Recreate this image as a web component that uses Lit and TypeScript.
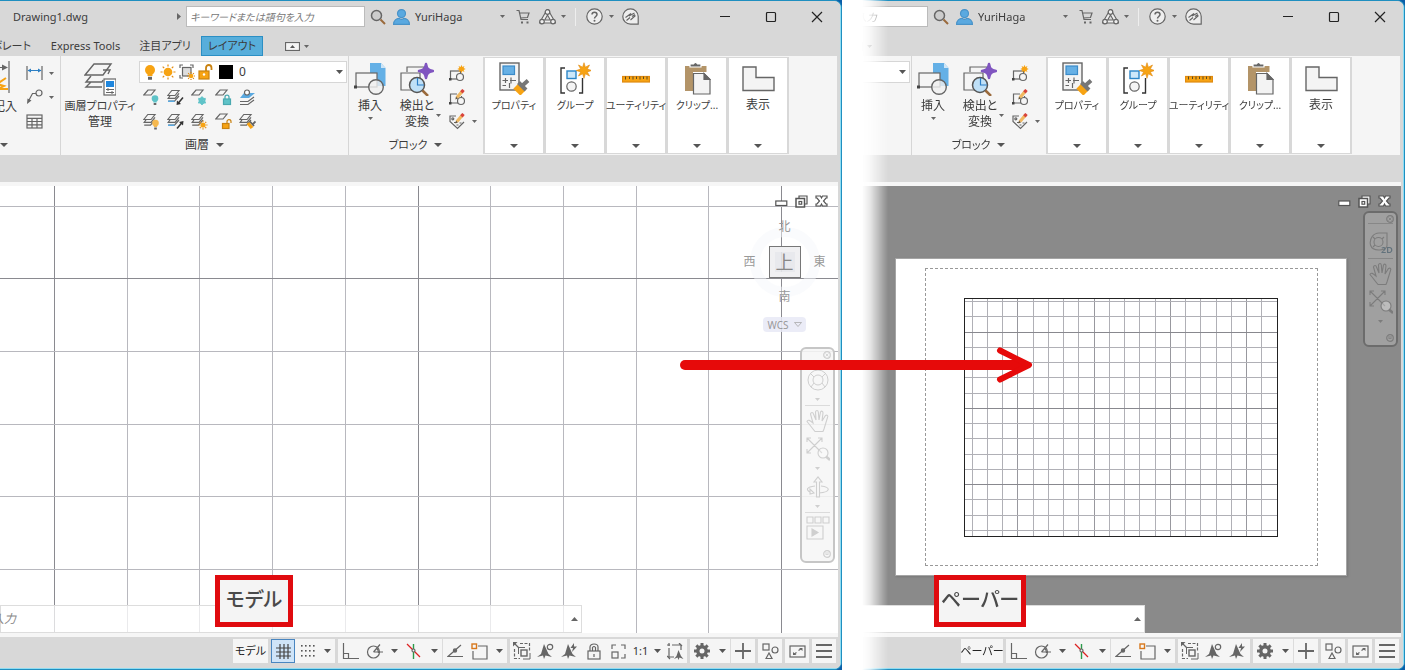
import { LitElement, html, svg, css, nothing } from "lit";
import { customElement, property } from "lit/decorators.js";

type Mode = "model" | "paper";

const G = "#666";
const ORANGE = "#f7a313";
const BLUE = "#5aa9e0";
const TEAL = "#5fc3c8";

const star = (cx: number, cy: number, n: number, outer: number, inner: number) =>
  Array.from({ length: n * 2 }, (_, i) => {
    const r = i % 2 ? inner : outer;
    const a = (Math.PI * i) / n - Math.PI / 2;
    return `${(cx + r * Math.cos(a)).toFixed(2)},${(cy + r * Math.sin(a)).toFixed(2)}`;
  }).join(" ");

const icon = (w: number, h: number, body: unknown) => html`<svg
  class="ic" width=${w} height=${h} viewBox="0 0 ${w} ${h}" fill="none"
  stroke=${G} stroke-width="1.2" aria-hidden="true">${body}</svg>`;

const sun = (cx: number, cy: number, r: number) => svg`
  <circle cx=${cx} cy=${cy} r=${r * 0.58} fill=${ORANGE} stroke="none"/>
  ${Array.from({ length: 8 }, (_, i) => {
    const a = (Math.PI * i) / 4;
    const c = Math.cos(a), s = Math.sin(a);
    return svg`<line x1=${cx + c * r * 0.72} y1=${cy + s * r * 0.72} x2=${cx + c * r} y2=${cy + s * r} stroke="#e08a10" stroke-width="1.2"/>`;
  })}`;

const bulb = (cx: number, cy: number, r: number, col: string) => svg`
  <circle cx=${cx} cy=${cy} r=${r} fill=${col} stroke="none"/>
  <path d="M${cx - r * 0.5} ${cy + r * 0.7}h${r}v${r * 0.5}h${-r}z" fill=${col} stroke="none"/>
  <path d="M${cx - r * 0.4} ${cy + r * 1.35}h${r * 0.8}v${r * 0.6}h${-r * 0.8}z" fill=${G} stroke="none"/>`;

const down = icon(7, 4, svg`<path d="M0 0H7L3.500 4Z" fill="#555" stroke="none"/>`);
const downSmall = icon(5, 3, svg`<path d="M0 0H5L2.500 3Z" fill="#666" stroke="none"/>`);
const downBig = icon(8, 4, svg`<path d="M0 0H8L4 4Z" fill="#555" stroke="none"/>`);

const stack = svg`<path d="M.8 6.500 4.800 1.500H12L8 6.500Z"/><path d="M3.200 6.500 1.200 9.300H8l4-5M1.200 12.200H7.500L12 7" stroke-width="1.200"/>`;
const single = svg`<path d="M.8 6 5 1H12L8 6Z"/>`;
const pencil = svg`<path d="M8 8.500 13.500 2" stroke="#f0b860" stroke-width="3.200"/><path d="M12.400 3.300 14.500 1" stroke="#d8433b" stroke-width="3.200"/><path d="M6.300 10.500 7 7.600 9 9.400Z" fill="#6b5a40" stroke="none"/>`;

const I = {
  search: icon(16, 16, svg`<circle cx="6.500" cy="6.500" r="5" fill="#ccc" stroke="#666" stroke-width="1.500"/><path d="M10.500 10.500 15 15" stroke="#9a6a3c" stroke-width="2"/>`),
  user: icon(17, 16, svg`<circle cx="8.500" cy="4.600" r="4" fill=${BLUE} stroke="#4a93c8"/><path d="M.6 15.300c0-4 3-5.800 5.400-6 1.500 1.200 3.500 1.200 5 0 2.400.2 5.400 2 5.400 6z" fill=${BLUE} stroke="#4a93c8"/>`),
  cart: icon(14, 15, svg`<path d="M.5 1.500H3L5 10.500H12M3.500 4H13L11.500 8.500 4.500 9"/><path d="M5 13.500h2M10.500 13.500h2" stroke-width="2.200"/>`),
  share: icon(17, 16, svg`<path d="M8.500 3 3 12.500H14Z" stroke-width="4.200"/><path d="M8.500 3 3 12.500H14Z" stroke="#eee" stroke-width="2"/><circle cx="8.500" cy="3" r="2.300" fill="#eee"/><circle cx="3" cy="12.600" r="2.300" fill="#eee"/><circle cx="14" cy="12.600" r="2.300" fill="#eee"/>`),
  help: icon(17, 17, svg`<circle cx="8.500" cy="8.500" r="7.700" fill="#eee"/><path d="M6 6.600c0-3.300 5-3.300 5 0 0 1.900-2.500 1.900-2.500 4" stroke-width="1.500"/><circle cx="8.500" cy="12.700" r="1" fill=${G} stroke="none"/>`),
  assist: icon(17, 17, svg`<path d="M8.500.8a7.700 7.700 0 1 0 0 15.400H16.200V8.500A7.700 7.700 0 0 0 8.500.8Z" fill="#eee"/><path d="M3.500 9.500 9 5.500 7 8 12.500 5M4.500 12.500 8 9.500M8.500 12 13.500 7.500M10 8.500 13 6.500" stroke-width="1.100"/>`),
  min: icon(12, 12, svg`<path d="M1 5.500H11" stroke="#222"/>`),
  max: icon(12, 12, svg`<rect x="1.500" y="1.500" width="9" height="9" rx="1" stroke="#222"/>`),
  close: icon(12, 12, svg`<path d="M1 1 11 11M11 1 1 11" stroke="#222"/>`),
  ribbonMin: icon(15, 9, svg`<rect x=".5" y=".5" width="14" height="8" fill="#f4f4f4"/><path d="M5 6H10L7.500 3Z" fill="#555" stroke="none"/>`),

  annotate: icon(22, 34, svg`<path d="M20 0V32M2 6.500H17" /><path d="M13 3.500 19 6.500 13 9.500Z" fill=${G} stroke="none"/><path d="M17 17 8 23 15 25 9 28H19" stroke=${ORANGE} stroke-width="2"/>`),
  dimension: icon(17, 16, svg`<path d="M1 1V15M16 1V15"/><path d="M2 5.500H15" stroke="#2c7fc4"/><path d="M1.500 5.500 5 3.500V7.500ZM15.500 5.500 12 3.500V7.500Z" fill="#2c7fc4" stroke="none"/>`),
  leader: icon(17, 16, svg`<circle cx="13" cy="4" r="3"/><path d="M10 4.500H6.500L2.500 12"/><path d="M1 15 1.500 9.500 5.500 11.500Z" fill=${G} stroke="none"/>`),
  table: icon(17, 15, svg`<rect x="1" y="1" width="15" height="13"/><path d="M1 4.300H16M1 7.500H16M1 10.800H16M6 4V14M11 4V14"/>`),

  layerProps: icon(32, 34, svg`<path d="M1 13 10 2H27L19 13Z" stroke-width="1.400"/><path d="M19 8 H26L24 12M7 14 2 20H18L19 18M7 20 2 25H18" stroke-width="1.400"/><rect x="20" y="17" width="12" height="16" fill="#fff"/><rect x="22" y="19" width="8" height="6" fill="#1f86dd" stroke="none"/><path d="M22 27.500H30M22 30.500H30M24 26v3M28 29v3" stroke-width="1"/>`),
  bulb: icon(14, 16, bulb(7, 6, 5, ORANGE)),
  sun: icon(16, 16, sun(8, 8, 7.5)),
  freezeVp: icon(16, 16, svg`<path d="M1 4V1H4M11 1H14V4M1 11V14H4"/><rect x="3.500" y="3.500" width="8.500" height="8.500" fill="#ddd"/>${sun(12, 12, 4)}`),
  unlock: icon(15, 16, svg`<rect x="1" y="7" width="10" height="8" fill=${ORANGE} stroke="#c98210"/><path d="M8 7V4C8 0 13.500 0 13.500 4V6" stroke="#c98210" stroke-width="1.800"/><circle cx="6" cy="10.500" r="1.200" fill="#fff" stroke="none"/>`),
  l1: icon(17, 17, svg`${single}${bulb(12, 9.5, 3.3, TEAL)}`),
  l2: icon(17, 17, svg`${stack}<path d="M1 12.200H7.500" stroke=${BLUE} stroke-width="1.500"/><path d="M16 8.500 11 14.500" stroke="#333" stroke-width="1.500"/><path d="M9.500 16 10 11.500 14 15Z" fill="#333" stroke="none"/>`),
  l3: icon(17, 17, svg`${single}<g stroke=${TEAL} stroke-width="1.700"><path d="M11 7.500V16M7.300 9.600 14.700 13.900M14.700 9.600 7.300 13.900"/><circle cx="11" cy="11.800" r="2.600"/></g>`),
  l4: icon(17, 17, svg`${single}<rect x="8.500" y="10" width="7" height="5.500" fill=${TEAL} stroke="#4aa9b0"/><path d="M10 10V8C10 5.500 14 5.500 14 8V10" stroke="#4aa9b0" stroke-width="1.300"/>`),
  l5: icon(17, 17, svg`<path d="M1 12.500H9L15 8M1 15.500H9L15 11"/><path d="M1 9 5 4H16L10 9Z" fill=${BLUE} stroke="none"/><circle cx="8" cy="3.500" r="2.500" fill="#fff"/>`),
  l6: icon(17, 17, svg`${stack}${bulb(12.5, 10, 3.3, "#f5b84e")}`),
  l7: icon(17, 17, svg`${stack}<path d="M1 12.200H7.500" stroke=${BLUE} stroke-width="1.500"/><path d="M10 15.500 15 9.500" stroke="#333" stroke-width="1.500"/><path d="M16.500 8 16 12.500 12 9Z" fill="#333" stroke="none"/>`),
  l8: icon(17, 17, svg`${stack}${sun(12, 12, 4.5)}`),
  l9: icon(17, 17, svg`${single}<rect x="7.500" y="10.500" width="6.500" height="5" fill=${ORANGE} stroke="#c98210"/><path d="M12 10.500V8.500C12 6 16 6 16 8.500V10" stroke="#c98210"/>`),
  l10: icon(17, 17, svg`${stack}<path d="M9 10 13 15" stroke=${ORANGE} stroke-width="3.500"/><path d="M11 8.500 15 13M14 11 16.500 8.500" stroke=${G} stroke-width="1.800"/>`),

  insert: icon(32, 34, svg`<path d="M16 1H27L31.500 6V24H16Z" fill="#64b0e6" stroke="none"/><path d="M27 1V6H31.500Z" fill="#cfe6f7" stroke="none"/><rect x="2" y="11" width="21" height="14" fill="#f5f5f5"/><rect x="0" y="23.500" width="3" height="3" fill="#444" stroke="none"/><circle cx="22" cy="25" r="7.300" fill="#f0f0f0" fill-opacity=".8" stroke-width="1.400"/>`),
  detect: icon(34, 34, svg`<path d="M7 10V5H24V10M1 11H20V28H1Z"/><path d="M26 2C27 7 28 8 33 9 28 10.200 27 11 26 16 25 11 24 10.200 19 9 24 8 25 7 26 2Z" fill="#8055c0" stroke="#8055c0" stroke-width="2.500" stroke-linejoin="round"/><circle cx="17" cy="23" r="7.500" fill="#bfe0f7" stroke="#555" stroke-width="1.500"/><path d="M17.500 16V23H24" stroke="#2d7fc8"/><path d="M22.500 28.500 28 34" stroke="#9a6a3c" stroke-width="2.500"/>`),
  b1: icon(17, 17, svg`<rect x="1.500" y="6" width="10" height="8"/><circle cx="11" cy="12" r="3.500" fill="#f5f5f5"/><rect x="0" y="13" width="2.500" height="2.500" fill="#444" stroke="none"/><polygon points=${star(12.5, 4, 8, 4.2, 2.3)} fill=${ORANGE} stroke="none"/>`),
  b2: icon(17, 17, svg`<path d="M8 5H1.500V14H9M12.500 7V9"/><circle cx="12" cy="12" r="3.500"/><rect x="0" y="13" width="2.500" height="2.500" fill="#444" stroke="none"/>${pencil}`),
  b3: icon(17, 17, svg`<path d="M7 3H1V8.500L8.500 15.500 15 9"/><circle cx="3.800" cy="5.800" r="1"/><path d="M5 9.500h2M7.500 12h2M10.500 10h2" stroke-width="1"/>${pencil}`),

  props: icon(32, 33, svg`<rect x="2" y="1" width="19" height="27" fill="#f4f4f4" stroke-width="1.400"/><rect x="5" y="4" width="11.500" height="8.500" fill="#66b0e5" stroke="#3b8bc9"/><path d="M4.500 18.500H10M12 18.500H18M7.500 16V21M13 15.500v6M4.500 23.500H8M11.500 21v5" /><path d="M18 24 25 31" stroke=${ORANGE} stroke-width="7.500"/><path d="M20.500 20.500 28 28" stroke="#777" stroke-width="4"/><path d="M25 23 30 18.500" stroke="#777" stroke-width="4"/>`),
  group: icon(32, 33, svg`<path d="M6 6H2V31H6M20 31H23.500V16" stroke="#333" stroke-width="1.400"/><rect x="8" y="9" width="9" height="7.500" fill="#cde8fa" stroke="#2c86c8" stroke-width="1.400"/><circle cx="12.500" cy="24.500" r="4.700" fill="#f4f4f4"/><polygon points=${star(25, 8.5, 8, 7.800, 3.600)} fill=${ORANGE} stroke="#e08a10" stroke-width=".6"/>`),
  ruler: icon(28, 8, svg`<rect x=".5" y="1.500" width="27" height="5.500" fill=${ORANGE} stroke="#e08a10"/><path d="M3.500 1.500V4.500M7.500 1.500V4M11 1.500V4.500M14.500 1.500V4M18 1.500V4.500M21.500 1.500V4M25 1.500V4.500" stroke="#5a4a20" stroke-width="1"/>`),
  clip: icon(28, 33, svg`<path d="M2 4H23.500V10H10V29H2Z" fill="#b39468" stroke="none"/><path d="M7 2H10.500Q12.500-1 14.500 2H18V5H7Z" fill="#666" stroke="#fff"/><path d="M10.500 11.500H21L27 17.500V32H10.500Z" fill="#f3f3f3"/><path d="M21 11.500V17.500H27Z" fill="#666"/>`),
  view: icon(33, 26, svg`<path d="M1 1H14V11.500H32V24.500H1Z" fill="#f4f4f4" stroke-width="1.400"/>`),

  vMin: icon(13, 7, svg`<rect x=".8" y="1" width="11" height="4.500" fill="#fff" stroke="#555"/>`),
  vRestore: icon(13, 13, svg`<path d="M4 3.500V1H12V9H9.500" stroke="#555" fill="#fff"/><rect x="1" y="3.500" width="8.500" height="8.500" fill="#fff" stroke="#555" stroke-width="1.500"/><rect x="4" y="6.500" width="2.700" height="2.700" stroke="#555"/>`),
  vClose: icon(13, 12, svg`<path d="M1 1H5.500L6.500 3 7.500 1H12V3H11L8.500 6 11 9H12V11H7.500L6.500 9 5.500 11H1V9H2L4.500 6 2 3H1Z" fill="#fff" stroke="#555" stroke-width="1.200"/>`),

  grid: icon(17, 17, svg`<path d="M5 1V16M9 1V16M13 1V16M1 5H16M1 9H16M1 13H16" stroke="#444"/>`),
  dots: icon(15, 15, svg`${[2, 6, 10, 14].map((x) => [2, 7, 12].map((y) => svg`<rect x=${x - 1} y=${y - 1} width="1.600" height="1.600" fill="#555" stroke="none"/>`))}`),
  ortho: icon(17, 17, svg`<path d="M1.500 0V15.500H17M1.500 10.500H6.500V15.500"/>`),
  polar: icon(17, 17, svg`<circle cx="7.500" cy="9" r="6"/><path d="M7.500 9H17M7.500 9 14 1.500M11 5.500Q12.500 7 12.500 10"/>`),
  iso: icon(16, 17, svg`<path d="M1 1 14 14" stroke="#d22"/><path d="M7.500 1V16" stroke="#2a9a4a" stroke-width="1.400"/><circle cx="7.500" cy="7.500" r="1.500" fill="#f5f5f5"/>`),
  angle: icon(17, 14, svg`<path d="M14 1 1 12.500H16"/><circle cx="8" cy="6.500" r="1.600" fill=${G}/>`),
  osnap: icon(17, 17, svg`<path d="M7 3H16V16H2V8"/><rect x="1" y="1" width="4.500" height="4.500" stroke="#d8781c" stroke-width="1.400"/>`),
  cycle: icon(18, 18, svg`<path d="M7 1.500H16.500V9M1.500 7V16.500H7" stroke-dasharray="3 1.500"/><path d="M1 1 6 6" /><path d="M0 0H4.500L0 4.500Z" fill=${G} stroke="none"/><rect x="8" y="8" width="6" height="6" stroke-width="1.400"/><path d="M5.500 12V5.500H12M17 11V17H10" stroke-width="1"/>`),
  ann1: icon(18, 17, svg`<path d="M7 1 11.500 11 15 14 8.500 12.500 7 16 6 12.500 0 14 4 11Z" fill=${G} stroke="none"/><circle cx="13" cy="4" r="2.700"/>`),
  ann2: icon(18, 17, svg`<path d="M7 1 11.500 11 15 14 8.500 12.500 7 16 6 12.500 0 14 4 11Z" fill=${G} stroke="none"/><path d="M13 0 9.500 5H12L11 9 16 3.500H13Z" fill=${G} stroke="none"/>`),
  lockGear: icon(14, 17, svg`<rect x="1" y="8" width="12" height="8"/><path d="M3 8V4C3 0 11 0 11 4V8M5.500 8V4.500Q7 2.500 8.500 4.500V8M7 11v3"/>`),
  scale: icon(15, 15, svg`<path d="M1 5V1H5M10 1H14V5M14 10V14H10"/><rect x="1" y="8" width="6" height="6"/>`),
  monitor: icon(17, 17, svg`<path d="M2 5V14H7M5 2H14V7M0 2H3M2 0V3M12 0 15 3M0 13 3 16"/><path d="M11.500 7 14 13 16.500 16 12.500 14.500 11.500 17 10.500 14.500 7 16 9.500 13Z" fill=${G} stroke="none"/>`),
  gear: icon(16, 16, svg`<circle cx="8" cy="8" r="4.200" stroke-width="3.400"/>${Array.from({ length: 8 }, (_, i) => svg`<path d="M8 0V3" stroke-width="3" transform="rotate(${i * 45} 8 8)"/>`)}`),
  plus: icon(16, 16, svg`<path d="M8 0V16M0 8H16" stroke-width="1.800"/>`),
  shapes: icon(17, 17, svg`<rect x="1" y="1" width="6" height="6"/><circle cx="13" cy="7" r="3"/><path d="M4 15.500 7 10 10 15.500Z"/>`),
  full: icon(17, 13, svg`<rect x="1" y="1" width="15" height="11"/><path d="M9.500 5.500 12.500 3.500M7.500 7.500 4.500 9.500"/><path d="M10 3H13.500V6ZM4 7V10H7.500Z" fill=${G} stroke="none"/>`),
  menu: icon(16, 14, svg`<path d="M0 1H16M0 7H16M0 13H16" stroke-width="1.800"/>`),

  navClose: icon(8, 8, svg`<circle cx="4" cy="4" r="3.300" stroke="currentColor"/><path d="M2.500 2.500 5.500 5.500M5.500 2.500 2.500 5.500" stroke="currentColor" stroke-width=".8"/>`),
  navMore: icon(8, 8, svg`<circle cx="4" cy="4" r="3.300" stroke="currentColor"/><path d="M2 3H6M2.500 4.500H5.500" stroke="currentColor" stroke-width=".8"/>`),
  wheel: icon(24, 22, svg`<g stroke="currentColor" stroke-width="1"><circle cx="12" cy="11" r="10"/><circle cx="12" cy="11" r="5"/><path d="M8 8 5 5M16 8 19 5M8 14 5 18M16 14 19 18"/></g>`),
  wheel2d: icon(24, 22, svg`<g stroke="currentColor" stroke-width="1.100"><path d="M10 1H18V14C18 18 4 21 1.500 13 0 6 5 1 10 1Z"/><circle cx="9.500" cy="10" r="4.500"/><path d="M6 7 4 5M6 13 4 15M13 7l2-2"/></g><text x="12" y="21" font-family="Noto Sans, sans-serif" font-size="9" font-weight="600" fill="#62727c" stroke="none">2D</text>`),
  hand: icon(24, 24, svg`<path d="M9 22.500C6 19 4 16 1 12.500 2 10 4 11.500 7 14L4.500 5C5 3 7 3 7.500 5L10 11 9.500 3C10 1 12 1 12.300 3L13 11 14.500 3C15.500 1.500 17 2 17 4L16 12 19.500 6.500C21 5.500 22.500 6.500 21.500 8.500L18 20 17 22.500Z" stroke="currentColor" stroke-width="1.100"/>`),
  zoomExt: icon(24, 24, svg`<g stroke="currentColor" stroke-width="1.100"><path d="M1 1 16 16M16 1 1 16M1 5V1H5M12 1H16V5M1 12V16H5"/><circle cx="17" cy="16" r="5" fill="#fff" fill-opacity=".3"/></g><path d="M20 19.500 24 23" stroke="currentColor" stroke-width="2.500"/>`),
  orbit: icon(24, 22, svg`<g stroke="currentColor" stroke-width="1.100"><path d="M10.500 21V6H8L12 1 16 6H13.500V21Z"/><path d="M9 10C0 11 0 14 4 16M15 10C25 11 25 16 13 17M4 13V18L8 17Z"/></g>`),
  motion: icon(24, 24, svg`<g stroke="currentColor" stroke-width="1.100"><path d="M1 1H7V7H1ZM9 1H15V7H9ZM17 1H23V7H17ZM1 10H17V23H1Z"/><path d="M6 13V20L12 16.500Z" fill="currentColor"/></g>`),
  navDown: icon(5, 3, svg`<path d="M0 0H5L2.500 3Z" fill="currentColor" stroke="none"/>`),
};

const base = css`
  *, *::before { box-sizing: border-box; }
  :host { font: 11px/16px "Noto Sans", "Noto Sans CJK JP", sans-serif; font-feature-settings: "palt"; color: #3c3c3c; }
  button, input, select { font: inherit; font-feature-settings: inherit; color: inherit; margin: 0; padding: 0; border: 0; background: none; border-radius: 0; }
  button { display: flex; align-items: center; justify-content: center; flex: none; white-space: nowrap; }
  .ic { display: block; flex: none; }
`;

@customElement("title-bar")
class TitleBar extends LitElement {
  static styles = [base, css`
    :host { display: flex; align-items: center; height: 31px; background: #d8d8d8; }
    .name { width: 172px; padding-left: 13px; flex: none; }
    .c8 { width: 8px; } .c14 { width: 14px; } .c18 { width: 18px; } .c20 { width: 20px; } .c24 { width: 24px; } .c26 { width: 26px; }
    .search { width: 179px; height: 21px; padding: 0 3px; background: #fff; border: 1px solid #bbb; font-size: 10px; font-style: italic; flex: none; }
    .search::placeholder { color: #777; opacity: 1; }
    .user { width: 102px; padding-left: 2px; justify-content: flex-start; gap: 5px; }
    .rule { width: 1px; height: 18px; margin: 0 8px; background: #eee; }
    .win { width: 46px; height: 31px; }
    .gap { flex: 1; }
  `];
  render() {
    return html`
      <span class="name">Drawing1.dwg</span>
      <button class="c14" aria-label="展開">${icon(4, 7, svg`<path d="M0 0V7L4 3.500Z" fill="#666" stroke="none"/>`)}</button>
      <input class="search" type="search" aria-label="検索" placeholder="キーワードまたは語句を入力">
      <button class="c26" aria-label="検索">${I.search}</button>
      <button class="user">${I.user}YuriHaga</button>
      <button class="c18" aria-label="アカウント">${downSmall}</button>
      <button class="c24" aria-label="ストア">${I.cart}</button>
      <button class="c24" aria-label="共有">${I.share}</button>
      <button class="c8" aria-label="共有メニュー">${downSmall}</button>
      <span class="rule"></span>
      <button class="c20" aria-label="ヘルプ">${I.help}</button>
      <button class="c14" aria-label="ヘルプメニュー">${downSmall}</button>
      <button class="c24" aria-label="アシスタント">${I.assist}</button>
      <span class="gap"></span>
      <button class="win" aria-label="最小化">${I.min}</button>
      <button class="win" aria-label="最大化">${I.max}</button>
      <button class="win" aria-label="閉じる">${I.close}</button>`;
  }
}

@customElement("tab-row")
class TabRow extends LitElement {
  static styles = [base, css`
    :host { display: flex; align-items: flex-end; height: 24px; background: #d8d8d8; }
    .tab { height: 20px; }
    .t0 { width: 31px; justify-content: flex-end; }
    .t1 { width: 109px; }
    .t2 { width: 50px; }
    .active { width: 62px; margin-left: 11px; background: #57aedb; border: 1px solid #2b8fc4; }
    .fold { height: 20px; margin-left: 22px; gap: 4px; }
  `];
  render() {
    return html`
      <button class="tab t0">コラボレート</button>
      <button class="tab t1">Express Tools</button>
      <button class="tab t2">注目アプリ</button>
      <button class="tab active">レイアウト</button>
      <button class="fold" aria-label="リボンを最小化">${I.ribbonMin}${downSmall}</button>`;
  }
}

@customElement("ribbon-bar")
class RibbonBar extends LitElement {
  static styles = [base, css`
    :host { display: flex; height: 99px; background: #f5f5f5; border-right: 3px solid #d8d8d8; }
    .panel { display: flex; flex-direction: column; flex: none; padding-top: 5px; border-right: 1px solid #d6d6d6; }
    .body { display: flex; height: 74px; }
    .title { height: 20px; gap: 7px; }
    .ann { width: 61px; }
    .ann .title { justify-content: flex-start; }
    .layer { width: 288px; }
    .block { width: 134px; border-right: 0; }
    .block .title { padding-right: 1px; }
    .note { flex-direction: column; justify-content: flex-start; align-items: flex-end; width: 17px; gap: 4px; }
    .note .ic { margin-right: 6px; }
    .kanji { font-size: 12px; }
    .minis { display: grid; grid-template-columns: 24px 10px; grid-template-rows: repeat(3, 24px); margin-left: 5px; }
    .big { flex-direction: column; justify-content: flex-start; padding-top: 1px; }
    .big .ic { margin-bottom: 2px; }
    .w78 { width: 78px; }
    .w42 { width: 42px; }
    .w42 .txt { margin-bottom: 3px; }
    .w34 { width: 34px; margin-left: 9px; }
    .tools { display: flex; flex-direction: column; }
    .combo { display: flex; align-items: center; width: 208px; height: 22px; padding: 0 3px; gap: 3px; background: #fff; border: 1px solid #d6d6d6; }
    .swatch { width: 14px; height: 14px; margin: 0 3px; background: #000; }
    .combo select { flex: 1; appearance: none; font-size: 12px; }
    .icons { display: grid; grid-template-columns: repeat(5, 24px); grid-auto-rows: 24px; padding-top: 2px; }
    .side { width: 9px; align-items: flex-end; padding-bottom: 18px; }
    .minis.bl { margin-left: 2px; }
    .flyouts { display: flex; gap: 3px; padding: 0 2px; margin: 1px 0; background: #d8d8d8; flex: none; }
    .fly { display: flex; flex-direction: column; width: 58px; height: 95px; margin: 1px 0; padding: 4px 0 5px; background: #fff; font-size: 10px; }
    .pic { display: flex; align-items: center; justify-content: center; height: 33px; margin-bottom: 2px; }
    .fly .ic { margin: 0; }
    .lab { flex: 1; }
  `];
  private mini = (label: string, ic: unknown) => html`<button aria-label=${label}>${ic}</button>`;
  private fly = (label: string, ic: unknown, cls = "") => html`<button class="fly"><span class="pic">${ic}</span><span class="lab ${cls}">${label}</span>${downBig}</button>`;
  render() {
    const m = this.mini;
    return html`
      <section class="panel ann">
        <div class="body">
          <button class="note kanji">${I.annotate}<span>寸法記入</span></button>
          <div class="minis">
            ${m("寸法", I.dimension)}${m("寸法メニュー", downSmall)}
            ${m("引出線", I.leader)}${m("引出線メニュー", downSmall)}
            ${m("表", I.table)}
          </div>
        </div>
        <button class="title" aria-label="注釈">${downBig}</button>
      </section>
      <section class="panel layer">
        <div class="body">
          <button class="big w78">${I.layerProps}<span>画層プロパティ</span><span class="kanji">管理</span></button>
          <div class="tools">
            <label class="combo">${I.bulb}${I.sun}${I.freezeVp}${I.unlock}<span class="swatch"></span>
              <select aria-label="画層"><option>0</option></select>${down}
            </label>
            <div class="icons">
              ${m("非表示", I.l1)}${m("選択表示", I.l2)}${m("フリーズ", I.l3)}${m("ロック", I.l4)}${m("現在層に設定", I.l5)}
              ${m("全表示", I.l6)}${m("選択表示解除", I.l7)}${m("全フリーズ解除", I.l8)}${m("ロック解除", I.l9)}${m("画層一致", I.l10)}
            </div>
          </div>
        </div>
        <button class="title kanji">画層 ${downBig}</button>
      </section>
      <section class="panel block">
        <div class="body">
          <button class="big w42 kanji">${I.insert}<span class="txt">挿入</span>${downSmall}</button>
          <button class="big w34 kanji">${I.detect}<span>検出と</span><span>変換</span></button>
          <button class="side" aria-label="検出メニュー">${downSmall}</button>
          <div class="minis bl">
            ${m("作成", I.b1)}<span></span>${m("編集", I.b2)}<span></span>
            ${m("属性編集", I.b3)}${m("属性メニュー", downSmall)}
          </div>
        </div>
        <button class="title">ブロック ${downBig}</button>
      </section>
      <div class="flyouts">
        ${this.fly("プロパティ", I.props)}${this.fly("グループ", I.group)}${this.fly("ユーティリティ", I.ruler)}${this.fly("クリップ...", I.clip)}${this.fly("表示", I.view, "kanji")}
      </div>`;
  }
}

@customElement("nav-bar")
class NavBar extends LitElement {
  @property({ reflect: true }) mode: Mode = "model";
  static styles = [base, css`
    :host { display: flex; flex-direction: column; align-items: center; width: 35px; padding: 2px; color: #cfcfcf; background: rgba(246, 246, 246, 0.85); border: 2px solid #c6c6c6; border-radius: 6px; }
    :host([mode="paper"]) { color: #7c7c7c; background: #a0a0a0; border-color: #6c6c6c; }
    .end { align-self: flex-end; }
    .lead { height: 15px; align-items: flex-start; }
    :host([mode="paper"]) .lead { height: 8px; }
    hr { width: 25px; height: 1px; margin: 1px 0; border: 0; color: inherit; background: currentColor; opacity: 0.7; }
    hr.first { margin: 0 0 5px; }
    .tool { height: 28px; }
    .drop { height: 10px; width: 24px; }
    .last { margin-top: 8px; }
  `];
  render() {
    const tool = (label: string, ic: unknown) => html`<button class="tool" aria-label=${label}>${ic}</button>`;
    const drop = html`<button class="drop" aria-label="メニュー">${I.navDown}</button>`;
    const paper = this.mode === "paper";
    return html`
      <button class="end lead" aria-label="閉じる">${I.navClose}</button>
      ${paper ? html`<hr class="first">` : nothing}
      ${paper ? html`${tool("ホイール", I.wheel2d)}<hr>` : html`${tool("ホイール", I.wheel)}${drop}<hr>`}
      ${tool("画面移動", I.hand)}${tool("ズーム", I.zoomExt)}${drop}
      ${paper ? nothing : html`${tool("オービット", I.orbit)}${drop}<hr>${tool("ShowMotion", I.motion)}`}
      <button class="end last" aria-label="オプション">${I.navMore}</button>`;
  }
}

@customElement("drawing-area")
class DrawingArea extends LitElement {
  @property({ reflect: true }) mode: Mode = "model";
  static styles = [base, css`
    :host { display: block; position: relative; overflow: hidden; background: #fff; }
    :host([mode="paper"]) { background: #8a8a8a; }
    .lines { position: absolute; inset: 0; width: 100%; height: 100%; }
    .controls { position: absolute; top: 8px; right: 10px; display: flex; gap: 7px; align-items: center; }
    .controls button { height: 14px; width: 13px; }
    .controls button:first-child { padding-top: 4px; }
    .cube { position: absolute; top: 23px; right: 1px; display: grid; grid-template: repeat(3, 35px) / repeat(3, 35px); place-items: center; font-size: 12px; color: #999; }
    .ring { position: absolute; top: 41px; right: 18px; width: 70px; height: 70px; border: 10px solid rgba(246, 247, 251, 0.5); border-radius: 50%; }
    .n { grid-column: 2; } .w { grid-column: 1; }
    .top { width: 32px; height: 32px; font-size: 18px; color: #888; border: 1px solid #777; background: rgba(230, 231, 235, 0.9); box-shadow: inset 0 0 0 5px #f0f0f2; }
    .wcs { position: absolute; top: 131px; right: 32px; height: 15px; width: 43px; gap: 5px; font-size: 10px; color: #999; background: rgba(232, 233, 246, 0.85); border-radius: 4px; }
    nav-bar { position: absolute; right: 3px; top: 161px; height: 216px; }
    nav-bar[mode="paper"] { top: 25px; height: 136px; }
    .sheet { position: absolute; top: 72px; right: 54px; width: 452px; height: 318px; padding: 9px 28px 9px 29px; background: #fff; border: 1px solid #a5a5a5; box-shadow: 1px 1px 2px #777; }
    .margin { height: 298px; padding: 29px 38px; border: 1px dashed #999; }
    .view { display: block; }
    .cmd { position: absolute; left: 0; bottom: 0; display: flex; align-items: center; width: 582px; height: 28px; font-size: 12px; background: rgba(255, 255, 255, 0.7); border: 1px solid #ddd; }
    :host([mode="paper"]) .cmd { background: #fff; }
    .cmd input { flex: 1; margin-left: -9px; font-style: italic; }
    .cmd input::placeholder { color: #888; opacity: 1; }
    .cmd button { width: 14px; }
  `];
  private modelLines() {
    const pitch = 72.7;
    const tone = (major: boolean) => (major ? "#8a8a90" : "#b8b8be");
    return html`<svg class="lines" shape-rendering="crispEdges" aria-hidden="true">
      ${Array.from({ length: 30 }, (_, i) => svg`<line x1=${Math.round(54 + i * pitch)} x2=${Math.round(54 + i * pitch)} y1="0" y2="100%" stroke=${tone(i % 5 === 0)}/>`)}
      ${Array.from({ length: 20 }, (_, i) => svg`<line x1="0" x2="100%" y1=${Math.round(19.6 + i * pitch)} y2=${Math.round(19.6 + i * pitch)} stroke=${tone(i % 5 === 1)}/>`)}
    </svg>`;
  }
  private sheet() {
    return html`<div class="sheet"><div class="margin">
      <svg class="view" width="314" height="239" viewBox="0 0 314 239" shape-rendering="crispEdges" aria-hidden="true">
        ${Array.from({ length: 20 }, (_, i) => svg`<line x1=${Math.round(7.6 + i * 15.25)} x2=${Math.round(7.6 + i * 15.25)} y1="0" y2="239" stroke=${i % 5 === 3 ? "#98989e" : "#b0b0b6"}/>`)}
        ${Array.from({ length: 16 }, (_, i) => svg`<line x1="0" x2="314" y1=${Math.round(3 + i * 15.25)} y2=${Math.round(3 + i * 15.25)} stroke=${i % 5 === 2 ? "#88888e" : "#b0b0b6"}/>`)}
        <rect x=".5" y=".5" width="313" height="238" fill="none" stroke="#222"/>
      </svg></div></div>`;
  }
  render() {
    return html`
      ${this.mode === "model"
        ? html`${this.modelLines()}
          <div class="ring"></div>
          <div class="cube"><span class="n">北</span><span class="w">西</span><button class="top">上</button><span>東</span><span class="n">南</span></div>
          <button class="wcs">WCS ${icon(8, 5, svg`<path d="M.5.5H7.500L4 4.500Z" stroke="#aaa" stroke-width=".8"/>`)}</button>`
        : this.sheet()}
      <div class="controls"><button aria-label="最小化">${I.vMin}</button><button aria-label="元に戻す">${I.vRestore}</button><button aria-label="閉じる">${I.vClose}</button></div>
      <nav-bar mode=${this.mode}></nav-bar>
      <div class="cmd"><input aria-label="コマンド" placeholder="入力"><button aria-label="履歴">${icon(7, 4, svg`<path d="M0 4H7L3.500 0Z" fill=${G} stroke="none"/>`)}</button></div>`;
  }
}

@customElement("status-bar")
class StatusBar extends LitElement {
  @property() mode: Mode = "model";
  static styles = [base, css`
    :host { display: flex; justify-content: flex-end; gap: 3px; height: 31px; padding: 2px 4px 5px 0; background: #d8d8d8; }
    .set { display: flex; flex: none; background: #f5f5f5; }
    button { height: 24px; }
    .i { width: 24px; } .d { width: 16px; }
    .ratio { width: 21px; color: #333; } .s { width: 12px; }
    .space { width: 35px; color: #222; }
    .wide { width: 42px; }
    .on { background: #cfe4f8; border: 1px solid #4a86c0; }
    .split { border-left: 1px solid #dcdcdc; }
  `];
  render() {
    const model = this.mode === "model";
    const b = (label: string, ic: unknown, cls = "i") => html`<button class=${cls} aria-label=${label}>${ic}</button>`;
    const d = b("メニュー", down, "d");
    return html`
      <div class="set"><button class="space ${model ? "" : "wide"}">${model ? "モデル" : "ペーパー"}</button></div>
      ${model ? html`<div class="set">${b("グリッド", I.grid, "i on")}${b("スナップ", I.dots)}${d}</div>` : nothing}
      <div class="set">${b("直交", I.ortho)}${b("極", I.polar)}${d}${b("アイソメ", I.iso)}${d}<span class="split"></span>${b("トラッキング", I.angle)}${b("オブジェクトスナップ", I.osnap)}${d}</div>
      <div class="set">${b("選択の循環", I.cycle)}${b("注釈表示", I.ann1)}${b("自動注釈", I.ann2)}
        ${model ? html`${b("ロック", I.lockGear)}${b("尺度", I.scale)}<button class="ratio">1:1</button>${b("尺度メニュー", down, "s")}${b("注釈モニター", I.monitor)}` : nothing}</div>
      <div class="set">${b("設定", I.gear)}${d}<span class="split"></span>${b("追加", I.plus)}</div>
      <div class="set">${b("選択表示", I.shapes)}</div>
      <div class="set">${b("フルスクリーン", I.full)}</div>
      <div class="set">${b("カスタマイズ", I.menu)}</div>`;
  }
}

@customElement("cad-window")
class CadWindow extends LitElement {
  @property({ reflect: true }) mode: Mode = "model";
  static styles = [base, css`
    :host { display: flex; justify-content: flex-end; position: relative; min-width: 0; overflow: hidden; background: #0b5ea8; }
    :host([mode="paper"]) { mask-image: linear-gradient(to right, transparent 20px, #0003 28px, #000 46px); }
    .shell { display: flex; flex-direction: column; flex: 1 0 842px; min-width: 842px; overflow: hidden; background: #d8d8d8; border: 1px solid #1f8fc0; border-left: 0; border-radius: 0 8px 8px 0; }
    .inner { display: flex; flex-direction: column; flex: 1; border: 1px solid #8fdcf2; border-width: 0 1px 1px 0; }
    .band { height: 27px; flex: none; }
    .strip { height: 4px; flex: none; margin-right: 2px; background: #f6f6f6; }
    drawing-area { flex: 1; margin-right: 2px; }
    .tag { position: absolute; display: flex; justify-content: center; width: 78px; height: 52px; right: 549px; bottom: 43px; padding-top: 4px; font-size: 20px; line-height: 30px; font-weight: 500; font-family: "Noto Sans CJK JP", sans-serif; color: #4a4a4a; background: #f4f4f4; border: 5px solid #e00b0f; white-space: nowrap; }
    .tag.paper { width: 92px; right: 379px; }
  `];
  render() {
    return html`<div class="shell"><div class="inner">
      <title-bar></title-bar><tab-row></tab-row><ribbon-bar></ribbon-bar>
      <div class="band"></div><div class="strip"></div>
      <drawing-area mode=${this.mode}></drawing-area>
      <div class="strip"></div><status-bar .mode=${this.mode}></status-bar>
    </div></div>
    <div class="tag ${this.mode}">${this.mode === "model" ? "モデル" : "ペーパー"}</div>`;
  }
}

@customElement("app-root")
class AppRoot extends LitElement {
  static styles = css`
    :host { display: grid; grid-template-columns: minmax(0, 842fr) minmax(0, 563fr); position: relative; height: 100vh; min-height: 560px; overflow: hidden; background: #fff; }
    .arrow { position: absolute; top: 345px; left: calc(842% / 14.05 - 164px); }
  `;
  render() {
    return html`
      <cad-window mode="model"></cad-window>
      <cad-window mode="paper"></cad-window>
      <svg class="arrow" width="360" height="40" viewBox="0 0 360 40" fill="none" stroke="#e60a0a" stroke-linecap="round" aria-hidden="true">
        <path d="M7 20H345" stroke-width="10"/><path d="M322 5.500 351 20 322 34.500" stroke-width="6" stroke-linejoin="round"/>
      </svg>`;
  }
}
